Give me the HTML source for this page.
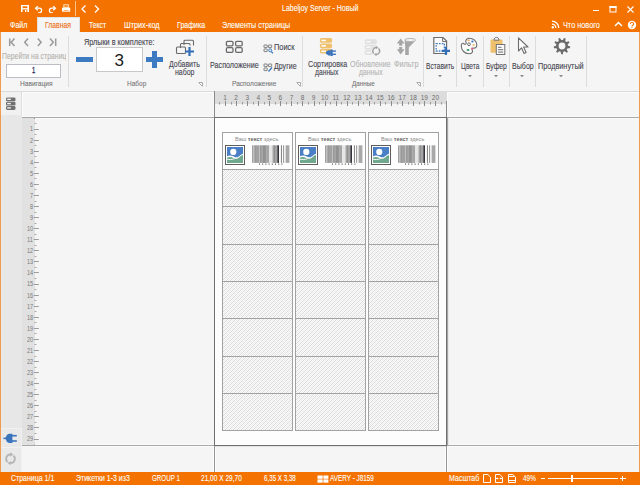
<!DOCTYPE html>
<html><head><meta charset="utf-8"><style>
html,body{margin:0;padding:0;}
body{width:640px;height:485px;overflow:hidden;position:relative;background:#F5F5F5;font-family:"Liberation Sans",sans-serif;}
body div, body svg{position:absolute;}
body div div{position:absolute;}
</style></head><body>
<div style="left:0px;top:0px;width:640px;height:32px;background:#F47300;"></div>
<div style="left:37px;top:17px;width:43px;height:15px;background:#F5F5F5;box-sizing:border-box;border:1px solid #E2E2E2;border-bottom:none"></div>
<div style="left:1px;top:32px;width:638px;height:59px;background:#F5F5F5;"></div>
<div style="left:1px;top:91px;width:638px;height:1px;background:#DADADA;"></div>
<div style="left:0px;top:32px;width:1px;height:440px;background:#F19A52;"></div>
<div style="left:639px;top:32px;width:1px;height:440px;background:#F19A52;"></div>
<div style="left:281.70px;top:4.00px;font-size:8.5px;line-height:8.5px;color:#ffffff;font-weight:400;transform:scaleX(0.8227);transform-origin:0 0;white-space:nowrap;-webkit-text-stroke:0.1px currentColor;">Labeljoy Server - Новый</div>
<svg style="left:20px;top:4px" width="10" height="9" viewBox="0 0 10 9"><rect x="1" y="1" width="8" height="7" fill="#ffffff"/><rect x="2.6" y="2.3" width="4.8" height="1.8" fill="#F47300"/><rect x="2.6" y="5.4" width="4.8" height="2.6" fill="#F47300"/><rect x="5" y="6" width="1.4" height="2" fill="#ffffff"/></svg>
<svg style="left:34px;top:4px" width="9" height="9" viewBox="0 0 9 9"><path d="M2 4.2h3.3a2.3 2.3 0 0 1 0 4.6h-1.3" fill="none" stroke="#ffffff" stroke-width="1.3"/><path d="M3.8 2.2L1.6 4.2L3.8 6.2" fill="none" stroke="#ffffff" stroke-width="1.3"/></svg>
<svg style="left:47.5px;top:4px" width="9" height="9" viewBox="0 0 9 9"><path d="M7 4.2h-3.3a2.3 2.3 0 0 0 0 4.6h1.3" fill="none" stroke="#ffffff" stroke-width="1.3"/><path d="M5.2 2.2L7.4 4.2L5.2 6.2" fill="none" stroke="#ffffff" stroke-width="1.3"/></svg>
<svg style="left:61px;top:4px" width="10" height="9" viewBox="0 0 10 9"><rect x="2.8" y="0.8" width="4.6" height="2.4" fill="none" stroke="#FFE0C0" stroke-width="1"/><rect x="1" y="3.4" width="8.2" height="4.4" rx="0.8" fill="#ffffff"/><rect x="2.6" y="6" width="5" height="1.2" fill="#F9B070"/></svg>
<div style="left:75px;top:1px;width:1px;height:15px;background:#FBC08C;"></div>
<svg style="left:80px;top:4px" width="8" height="9" viewBox="0 0 8 9"><path d="M5.5 1.5L2 5L5.5 8.5" fill="none" stroke="#ffffff" stroke-width="1.3"/></svg>
<svg style="left:93px;top:4px" width="8" height="9" viewBox="0 0 8 9"><path d="M2 1.5L5.5 5L2 8.5" fill="none" stroke="#ffffff" stroke-width="1.3"/></svg>
<div style="left:593px;top:10px;width:6px;height:1px;background:#ffffff;"></div>
<svg style="left:608px;top:5px" width="10" height="9" viewBox="0 0 10 9"><rect x="2" y="1.5" width="6" height="5.5" fill="none" stroke="#ffffff" stroke-width="1"/><rect x="1.5" y="1" width="7" height="2" fill="#ffffff"/></svg>
<svg style="left:626px;top:5px" width="9" height="9" viewBox="0 0 9 9"><path d="M1.5 1.5L7.5 7.5M7.5 1.5L1.5 7.5" stroke="#ffffff" stroke-width="1.1"/></svg>
<div style="left:10.00px;top:21.00px;font-size:8.5px;line-height:8.5px;color:#ffffff;font-weight:400;transform:scaleX(0.8358);transform-origin:0 0;white-space:nowrap;-webkit-text-stroke:0.1px currentColor;">Файл</div>
<div style="left:45.00px;top:21.00px;font-size:8.5px;line-height:8.5px;color:#EE6A10;font-weight:400;transform:scaleX(0.8031);transform-origin:0 0;white-space:nowrap;-webkit-text-stroke:0.1px currentColor;">Главная</div>
<div style="left:89.40px;top:21.00px;font-size:8.5px;line-height:8.5px;color:#ffffff;font-weight:400;transform:scaleX(0.7951);transform-origin:0 0;white-space:nowrap;-webkit-text-stroke:0.1px currentColor;">Текст</div>
<div style="left:123.90px;top:21.00px;font-size:8.5px;line-height:8.5px;color:#ffffff;font-weight:400;transform:scaleX(0.8559);transform-origin:0 0;white-space:nowrap;-webkit-text-stroke:0.1px currentColor;">Штрих-код</div>
<div style="left:176.60px;top:21.00px;font-size:8.5px;line-height:8.5px;color:#ffffff;font-weight:400;transform:scaleX(0.8298);transform-origin:0 0;white-space:nowrap;-webkit-text-stroke:0.1px currentColor;">Графика</div>
<div style="left:222.00px;top:21.00px;font-size:8.5px;line-height:8.5px;color:#ffffff;font-weight:400;transform:scaleX(0.8390);transform-origin:0 0;white-space:nowrap;-webkit-text-stroke:0.1px currentColor;">Элементы страницы</div>
<div style="left:562.70px;top:21.00px;font-size:8.5px;line-height:8.5px;color:#ffffff;font-weight:400;transform:scaleX(0.8598);transform-origin:0 0;white-space:nowrap;-webkit-text-stroke:0.1px currentColor;">Что нового</div>
<svg style="left:551px;top:20px" width="9" height="9" viewBox="0 0 9 9"><circle cx="1.8" cy="7.2" r="1.2" fill="#ffffff"/><path d="M1 4.2a3.8 3.8 0 0 1 3.8 3.8M1 1.2a6.8 6.8 0 0 1 6.8 6.8" fill="none" stroke="#ffffff" stroke-width="1.3"/></svg>
<svg style="left:614px;top:21px" width="9" height="6" viewBox="0 0 9 6"><path d="M1 5L4.5 1.5L8 5" fill="none" stroke="#ffffff" stroke-width="1.5"/></svg>
<svg style="left:627px;top:20px" width="10" height="10" viewBox="0 0 10 10"><circle cx="5" cy="5" r="4.2" fill="#ffffff"/><path d="M3.4 3.9a1.6 1.6 0 1 1 2.3 1.4c-.5.3-.7.6-.7 1.1" fill="none" stroke="#F47300" stroke-width="1.1"/><circle cx="5" cy="7.6" r="0.6" fill="#F47300"/></svg>
<div style="left:68px;top:36px;width:1px;height:51px;background:#DCDCDC;"></div>
<div style="left:206px;top:36px;width:1px;height:51px;background:#DCDCDC;"></div>
<div style="left:302px;top:36px;width:1px;height:51px;background:#DCDCDC;"></div>
<div style="left:423px;top:36px;width:1px;height:51px;background:#DCDCDC;"></div>
<div style="left:456px;top:36px;width:1px;height:51px;background:#DCDCDC;"></div>
<div style="left:483px;top:36px;width:1px;height:51px;background:#DCDCDC;"></div>
<div style="left:509px;top:36px;width:1px;height:51px;background:#DCDCDC;"></div>
<div style="left:535px;top:36px;width:1px;height:51px;background:#DCDCDC;"></div>
<div style="left:586px;top:36px;width:1px;height:51px;background:#DCDCDC;"></div>
<svg style="left:8px;top:37px" width="50" height="10" viewBox="0 0 50 10"><g fill="none" stroke="#9A9A9A" stroke-width="1.5"><path d="M1.7 1.5v7.5M6.5 1.5L3.2 5.2L6.5 9"/><path d="M20 1.5L16.7 5.2L20 9"/><path d="M29.8 1.5L33.1 5.2L29.8 9"/><path d="M42 1.5L45.3 5.2L42 9M47.7 1.5v7.5"/></g></svg>
<div style="left:1px;top:50px;width:65px;height:12px;overflow:hidden"><div style="left:1.00px;top:2.07px;font-size:8.5px;line-height:8.5px;color:#B4B0AC;-webkit-text-stroke:0.1px currentColor;transform:scaleX(0.8076);transform-origin:0 0;white-space:nowrap">Перейти на страницу</div></div>
<div style="left:5.5px;top:64px;width:55px;height:13.5px;background:#ffffff;box-sizing:border-box;border:1px solid #BDBDC6"></div>
<div style="left:31.60px;top:66.00px;font-size:9px;line-height:9px;color:#2A2A5A;font-weight:400;transform:scaleX(0.6400);transform-origin:0 0;white-space:nowrap;-webkit-text-stroke:0.3px currentColor;">1</div>
<div style="left:19.70px;top:80.00px;font-size:8px;line-height:8px;color:#767676;font-weight:400;transform:scaleX(0.8242);transform-origin:0 0;white-space:nowrap;-webkit-text-stroke:0.1px currentColor;">Навигация</div>
<div style="left:84.30px;top:38.00px;font-size:8.5px;line-height:8.5px;color:#44444F;font-weight:400;transform:scaleX(0.8523);transform-origin:0 0;white-space:nowrap;-webkit-text-stroke:0.1px currentColor;">Ярлыки в комплекте:</div>
<div style="left:76px;top:57px;width:17px;height:4.5px;background:#3C7AC2;"></div>
<div style="left:96px;top:47px;width:47px;height:25px;background:#ffffff;box-sizing:border-box;border:1px solid #C8C8C8"></div>
<div style="left:114.50px;top:52.00px;font-size:17px;line-height:17px;color:#1A1A1A;font-weight:400;transform:scaleX(1.0000);transform-origin:0 0;white-space:nowrap;">3</div>
<div style="left:145.5px;top:57px;width:17.5px;height:4.5px;background:#3C7AC2;"></div>
<div style="left:152px;top:51px;width:4.5px;height:17px;background:#3C7AC2;"></div>
<svg style="left:175px;top:39px" width="21" height="18" viewBox="0 0 21 18"><g fill="none" stroke="#6a6a6a" stroke-width="1.1"><path d="M9 6V2.2a1 1 0 0 1 1-1h7.5a1 1 0 0 1 1 1V6.5"/><path d="M5.5 9V5.5a1 1 0 0 1 1-1h7.5a1 1 0 0 1 1 1V6.5"/><rect x="1.5" y="8" width="9" height="6.5" rx="1"/></g><path d="M14.5 8v9M10 12.5h9" stroke="#3470B8" stroke-width="2.2"/></svg>
<div style="left:169.00px;top:60.00px;font-size:8.5px;line-height:8.5px;color:#44444F;font-weight:400;transform:scaleX(0.8207);transform-origin:0 0;white-space:nowrap;-webkit-text-stroke:0.1px currentColor;">Добавить</div>
<div style="left:175.00px;top:68.00px;font-size:8.5px;line-height:8.5px;color:#44444F;font-weight:400;transform:scaleX(0.8202);transform-origin:0 0;white-space:nowrap;-webkit-text-stroke:0.1px currentColor;">набор</div>
<div style="left:127.30px;top:80.00px;font-size:8px;line-height:8px;color:#767676;font-weight:400;transform:scaleX(0.8121);transform-origin:0 0;white-space:nowrap;-webkit-text-stroke:0.1px currentColor;">Набор</div>
<svg style="left:225px;top:40px" width="19" height="14" viewBox="0 0 19 14"><g fill="none" stroke="#6a6a6a" stroke-width="1.3"><rect x="1.4" y="1.4" width="6.6" height="4.4" rx="1.2"/><rect x="10.6" y="1.4" width="6.6" height="4.4" rx="1.2"/><rect x="1.4" y="7.7" width="6.6" height="4.6" rx="1.2"/><rect x="10.6" y="7.7" width="6.6" height="4.6" rx="1.2"/></g></svg>
<div style="left:210.00px;top:61.00px;font-size:8.5px;line-height:8.5px;color:#44444F;font-weight:400;transform:scaleX(0.8441);transform-origin:0 0;white-space:nowrap;-webkit-text-stroke:0.1px currentColor;">Расположение</div>
<svg style="left:262.5px;top:43.5px" width="11" height="10" viewBox="0 0 11 10"><g fill="none" stroke="#808080" stroke-width="1"><rect x="1" y="1" width="3.2" height="2.6" rx=".3"/><rect x="5.5" y="1" width="3.2" height="2.6" rx=".3"/><rect x="1" y="5" width="3.2" height="2.6" rx=".3"/></g><circle cx="7.2" cy="6.3" r="1.5" fill="none" stroke="#3C7AC2" stroke-width="1"/><path d="M8.3 7.5L10 9.3" stroke="#3C7AC2" stroke-width="1.2"/></svg>
<div style="left:274.20px;top:43.00px;font-size:8.5px;line-height:8.5px;color:#44444F;font-weight:400;transform:scaleX(0.8727);transform-origin:0 0;white-space:nowrap;-webkit-text-stroke:0.1px currentColor;">Поиск</div>
<svg style="left:262.5px;top:62.5px" width="11" height="9" viewBox="0 0 11 9"><g fill="none" stroke="#808080" stroke-width="1"><rect x="1" y="1" width="3.2" height="2.6" rx=".3"/><rect x="5.5" y="1" width="3.2" height="2.6" rx=".3"/><rect x="1" y="5" width="3.2" height="2.6" rx=".3"/></g><path d="M9 4.5L5.5 8.5" stroke="#3C7AC2" stroke-width="1.4"/></svg>
<div style="left:274.20px;top:62.00px;font-size:8.5px;line-height:8.5px;color:#44444F;font-weight:400;transform:scaleX(0.8295);transform-origin:0 0;white-space:nowrap;-webkit-text-stroke:0.1px currentColor;">Другие</div>
<div style="left:231.80px;top:80.00px;font-size:8px;line-height:8px;color:#767676;font-weight:400;transform:scaleX(0.8138);transform-origin:0 0;white-space:nowrap;-webkit-text-stroke:0.1px currentColor;">Расположение</div>
<svg style="left:318px;top:37px" width="20" height="19" viewBox="0 0 20 19"><rect x="1.9" y="1.0" width="12.2" height="4.8" rx="1.6" fill="#EFC06E"/><rect x="3.5" y="2.7" width="4.4" height="1.5" fill="#ffffff"/><rect x="1.9" y="6.4" width="12.2" height="4.8" rx="1.6" fill="#EFC06E"/><rect x="3.5" y="8.1" width="4.4" height="1.5" fill="#ffffff"/><rect x="1.9" y="11.8" width="12.2" height="4.8" rx="1.6" fill="#EFC06E"/><rect x="3.5" y="13.5" width="4.4" height="1.5" fill="#ffffff"/><g fill="#3A74BC"><path d="M8 14.8l2.5-1.6h2.3v5.2h-2.3L8 16.8z"/><rect x="12.5" y="12.6" width="2.3" height="6.4" rx=".5"/><rect x="14.5" y="13.4" width="3.4" height="1.4"/><rect x="14.5" y="16.6" width="3.4" height="1.4"/></g></svg>
<div style="left:307.50px;top:60.00px;font-size:8.5px;line-height:8.5px;color:#44444F;font-weight:400;transform:scaleX(0.8397);transform-origin:0 0;white-space:nowrap;-webkit-text-stroke:0.1px currentColor;">Сортировка</div>
<div style="left:315.00px;top:68.00px;font-size:8.5px;line-height:8.5px;color:#44444F;font-weight:400;transform:scaleX(0.7918);transform-origin:0 0;white-space:nowrap;-webkit-text-stroke:0.1px currentColor;">данных</div>
<svg style="left:363px;top:38px" width="20" height="19" viewBox="0 0 20 19"><rect x="1.7" y="1.3" width="12.2" height="4.8" rx="1.6" fill="#E0E0E0"/><rect x="3.3" y="3.0" width="4.4" height="1.5" fill="#F9F9F9"/><rect x="1.7" y="6.7" width="12.2" height="4.8" rx="1.6" fill="#E0E0E0"/><rect x="3.3" y="8.4" width="4.4" height="1.5" fill="#F9F9F9"/><rect x="1.7" y="12.100000000000001" width="12.2" height="4.8" rx="1.6" fill="#E0E0E0"/><rect x="3.3" y="13.8" width="4.4" height="1.5" fill="#F9F9F9"/><circle cx="13.2" cy="13" r="5" fill="#F5F5F5"/><g fill="none" stroke="#A4A4A4" stroke-width="1.5"><path d="M13.6 9.6A3.4 3.4 0 0 0 10.9 15.5"/><path d="M12.8 16.4A3.4 3.4 0 0 0 15.5 10.5"/></g><path d="M12.9 7.9L15.5 9.6L12.9 11.3z M13.5 14.7L10.9 16.4L13.5 18.1z" fill="#A4A4A4"/></svg>
<div style="left:350.00px;top:60.00px;font-size:8.5px;line-height:8.5px;color:#B4B4B4;font-weight:400;transform:scaleX(0.8267);transform-origin:0 0;white-space:nowrap;-webkit-text-stroke:0.1px currentColor;">Обновление</div>
<div style="left:358.80px;top:68.00px;font-size:8.5px;line-height:8.5px;color:#B4B4B4;font-weight:400;transform:scaleX(0.8017);transform-origin:0 0;white-space:nowrap;-webkit-text-stroke:0.1px currentColor;">данных</div>
<svg style="left:395px;top:37px" width="22" height="19" viewBox="0 0 22 19"><g fill="#A6A6A6"><path d="M1.8 6.6L5.7 1.6L9.6 6.6H7.2V8.8H4.2V6.6z"/><path d="M1.8 12.2L5.7 17.6L9.6 12.2H7.2V10H4.2V12.2z"/><path d="M9.6 3.2Q15.5 5.6 20.8 3.2L13.8 10.6V18H10.2V9.2z"/></g><ellipse cx="15.2" cy="3" rx="5.4" ry="1.5" fill="#F8F8F8" stroke="#B0B0B0" stroke-width="1"/></svg>
<div style="left:393.90px;top:60.00px;font-size:8.5px;line-height:8.5px;color:#B4B4B4;font-weight:400;transform:scaleX(0.8568);transform-origin:0 0;white-space:nowrap;-webkit-text-stroke:0.1px currentColor;">Фильтр</div>
<div style="left:352.00px;top:80.00px;font-size:8px;line-height:8px;color:#767676;font-weight:400;transform:scaleX(0.7911);transform-origin:0 0;white-space:nowrap;-webkit-text-stroke:0.1px currentColor;">Данные</div>
<svg style="left:198px;top:81.5px" width="5" height="5" viewBox="0 0 5 5"><path d="M0.5 0.5h4v4" fill="none" stroke="#9a9a9a" stroke-width=".8"/><path d="M1 1L4 4" stroke="#9a9a9a" stroke-width=".8"/></svg>
<svg style="left:295.5px;top:81.5px" width="5" height="5" viewBox="0 0 5 5"><path d="M0.5 0.5h4v4" fill="none" stroke="#9a9a9a" stroke-width=".8"/><path d="M1 1L4 4" stroke="#9a9a9a" stroke-width=".8"/></svg>
<svg style="left:416px;top:81.5px" width="5" height="5" viewBox="0 0 5 5"><path d="M0.5 0.5h4v4" fill="none" stroke="#9a9a9a" stroke-width=".8"/><path d="M1 1L4 4" stroke="#9a9a9a" stroke-width=".8"/></svg>
<svg style="left:432px;top:36px" width="20" height="20" viewBox="0 0 20 20"><path d="M1.8 1.5h9.2l3.6 3.6v12.4H1.8z" fill="#fbfbfb" stroke="#6d6d6d" stroke-width="1.2"/><path d="M10.6 1.8v3.8h3.8" fill="none" stroke="#6d6d6d" stroke-width="1"/><rect x="4.2" y="7.6" width="8.2" height="7.4" fill="none" stroke="#3C7AC2" stroke-width="1.3" stroke-dasharray="1.6 1.2"/><path d="M13.9 10.7v8.2M9.8 14.8h8.2" stroke="#3470B8" stroke-width="2.2"/></svg>
<div style="left:426.00px;top:62.00px;font-size:8.5px;line-height:8.5px;color:#44444F;font-weight:400;transform:scaleX(0.7841);transform-origin:0 0;white-space:nowrap;-webkit-text-stroke:0.1px currentColor;">Вставить</div>
<svg style="left:460px;top:37px" width="19" height="18" viewBox="0 0 19 18"><path d="M9 1.2c4.3 0 7.8 2.9 7.8 6.7c0 2.3-1.6 3.2-3.2 3.2c-1.4 0-2 .9-1.3 2.2c.8 1.6-.3 3.4-3.4 3.4C4.6 16.7 1.3 13.4 1.3 9.1c0-1 .3-1.9.8-2.6c.4-.5 1.3-.3 1.9.3c.9.9 2.2.5 2.2-.8c0-1.2-.9-1.9-.3-2.7C6.6 2 7.7 1.2 9 1.2z" fill="#fbfbfb" stroke="#6d6d6d" stroke-width="1.1"/><circle cx="9" cy="7.3" r="1.4" fill="none" stroke="#6d6d6d" stroke-width="1"/><ellipse cx="8.6" cy="3.2" rx="1.3" ry=".8" fill="#F5A040"/><ellipse cx="12.4" cy="4.6" rx="1.2" ry="1" fill="#3C7AC2"/><ellipse cx="13.6" cy="8" rx="1.1" ry="1" fill="#F0C060"/><ellipse cx="12.2" cy="11.5" rx="1.1" ry="1" fill="#E06080"/><ellipse cx="8" cy="13" rx="1.5" ry="1" fill="#3E9A6E"/></svg>
<div style="left:461.00px;top:62.00px;font-size:8.5px;line-height:8.5px;color:#44444F;font-weight:400;transform:scaleX(0.7766);transform-origin:0 0;white-space:nowrap;-webkit-text-stroke:0.1px currentColor;">Цвета</div>
<svg style="left:489px;top:36px" width="17" height="20" viewBox="0 0 17 20"><rect x="1.5" y="3.6" width="12" height="13.2" rx="1" fill="#EFC06E"/><path d="M5 4.2c0-1.8 1-2.8 2.5-2.8s2.5 1 2.5 2.8z" fill="#f3f3f3" stroke="#707070" stroke-width="1"/><rect x="7.3" y="8.5" width="8.5" height="10" fill="#fbfbfb" stroke="#707070" stroke-width="1"/><path d="M9 11.3h3.5M9 13.7h5.2M9 16.1h5.2" stroke="#6d6d6d" stroke-width="1"/></svg>
<div style="left:485.70px;top:62.00px;font-size:8.5px;line-height:8.5px;color:#44444F;font-weight:400;transform:scaleX(0.7995);transform-origin:0 0;white-space:nowrap;-webkit-text-stroke:0.1px currentColor;">Буфер</div>
<svg style="left:516px;top:36px" width="14" height="19" viewBox="0 0 14 19"><path d="M2.5 1.8v13.2l3-3.2l2.6 5.6l2-1l-2.5-5.4h4.4z" fill="#fbfbfb" stroke="#6d6d6d" stroke-width="1.1" stroke-linejoin="round"/></svg>
<div style="left:511.50px;top:62.00px;font-size:8.5px;line-height:8.5px;color:#44444F;font-weight:400;transform:scaleX(0.8341);transform-origin:0 0;white-space:nowrap;-webkit-text-stroke:0.1px currentColor;">Выбор</div>
<svg style="left:553px;top:37px" width="18" height="18" viewBox="0 0 18 18"><path d="M10.27 14.87 L9.85 17.26 L8.15 17.26 L7.73 14.87 L6.20 14.31 L4.34 15.87 L3.05 14.78 L4.26 12.68 L3.44 11.26 L1.02 11.27 L0.72 9.60 L3.00 8.77 L3.29 7.16 L1.43 5.60 L2.27 4.14 L4.55 4.97 L5.80 3.92 L5.38 1.53 L6.97 0.95 L8.18 3.06 L9.82 3.06 L11.03 0.95 L12.62 1.53 L12.20 3.92 L13.45 4.97 L15.73 4.14 L16.57 5.60 L14.71 7.16 L15.00 8.77 L17.28 9.60 L16.98 11.27 L14.56 11.26 L13.74 12.68 L14.95 14.78 L13.66 15.87 L11.80 14.31Z M12.4 9a3.4 3.4 0 1 0 -6.8 0a3.4 3.4 0 1 0 6.8 0z" fill="#6a6a6a" fill-rule="evenodd"/></svg>
<div style="left:537.70px;top:62.00px;font-size:8.5px;line-height:8.5px;color:#44444F;font-weight:400;transform:scaleX(0.8572);transform-origin:0 0;white-space:nowrap;-webkit-text-stroke:0.1px currentColor;">Продвинутый</div>
<svg style="left:437.5px;top:75px" width="4" height="3" viewBox="0 0 4 3"><path d="M0 0h4l-2 2.2z" fill="#8a8a8a"/></svg>
<svg style="left:467.7px;top:75px" width="4" height="3" viewBox="0 0 4 3"><path d="M0 0h4l-2 2.2z" fill="#8a8a8a"/></svg>
<svg style="left:494px;top:75px" width="4" height="3" viewBox="0 0 4 3"><path d="M0 0h4l-2 2.2z" fill="#8a8a8a"/></svg>
<svg style="left:520px;top:75px" width="4" height="3" viewBox="0 0 4 3"><path d="M0 0h4l-2 2.2z" fill="#8a8a8a"/></svg>
<svg style="left:559px;top:75px" width="4" height="3" viewBox="0 0 4 3"><path d="M0 0h4l-2 2.2z" fill="#8a8a8a"/></svg>
<div style="left:1px;top:92px;width:638px;height:380px;background:#F5F5F5;"></div>
<div style="left:1px;top:92px;width:21px;height:380px;background:#E7E7E7;"></div>
<div style="left:1px;top:92px;width:21px;height:23px;background:#F1F1F1;"></div>
<div style="left:1px;top:428px;width:21px;height:19px;background:#E9E9E9;"></div>
<div style="left:1px;top:447px;width:21px;height:25px;background:#E9E9E9;"></div>
<div style="left:1px;top:428px;width:21px;height:1px;background:#F2F2F2;"></div>
<div style="left:1px;top:447px;width:21px;height:1px;background:#F2F2F2;"></div>
<div style="left:21px;top:428px;width:1px;height:44px;background:#F0F0F0;"></div>
<div style="left:21px;top:92px;width:1px;height:23px;background:#DEDEDE;"></div>
<div style="left:22px;top:92px;width:192px;height:1px;background:#FCFCFC;"></div>
<div style="left:22px;top:92px;width:1px;height:25px;background:#FCFCFC;"></div>
<div style="left:22px;top:116px;width:192px;height:1px;background:#FAFAFA;"></div>
<div style="left:213px;top:92px;width:1px;height:25px;background:#FAFAFA;"></div>
<svg style="left:5px;top:96px" width="12" height="15" viewBox="0 0 12 15"><g fill="#707070"><rect x="1" y="1.5" width="9.5" height="3.8" rx="1.3"/><rect x="1" y="5.8" width="9.5" height="3.8" rx="1.3"/><rect x="1" y="10.1" width="9.5" height="3.8" rx="1.3"/></g><g fill="#f1f1f1"><rect x="2.2" y="2.6" width="3.6" height="1.4"/><rect x="2.2" y="6.9" width="3.6" height="1.4"/><rect x="2.2" y="11.2" width="3.6" height="1.4"/></g></svg>
<svg style="left:3px;top:433px" width="15" height="11" viewBox="0 0 15 11"><g fill="#3A74BC"><rect x="0.4" y="4.6" width="3.2" height="1.5"/><path d="M2.8 4.2Q3.6 1.2 6 0.8H9.4V10H6Q3.6 9.6 2.8 6.6Z"/><rect x="9" y="1.9" width="4.8" height="1.6"/><rect x="9" y="7.2" width="4.8" height="1.6"/></g></svg>
<svg style="left:4px;top:452px" width="14" height="14" viewBox="0 0 14 14"><g fill="none" stroke="#B6B6B6" stroke-width="1.9"><path d="M6.8 2.5A4.3 4.3 0 0 0 3.6 10"/><path d="M6.2 11.1A4.3 4.3 0 0 0 9.4 3.6"/></g><path d="M6.2 0.3L9.4 2.5L6.2 4.7z M6.8 8.9L3.6 11.1L6.8 13.3z" fill="#B6B6B6"/></svg>
<div style="left:22px;top:118px;width:13px;height:327px;background:#E1E1E1;"></div>
<div style="left:215px;top:91px;width:232px;height:13px;background:#DCDCDC;"></div>
<div style="left:447px;top:92px;width:192px;height:1px;background:#FCFCFC;"></div>
<div style="left:447px;top:92px;width:1px;height:25px;background:#FCFCFC;"></div>
<div style="left:447px;top:116px;width:192px;height:1px;background:#FAFAFA;"></div>
<svg style="left:214px;top:92px" width="234" height="15" viewBox="0 0 234 15"><rect x="0" y="9" width="1" height="5" fill="#8A8A8A"/><rect x="5" y="10" width="1" height="2.5" fill="#9A9A9A"/><rect x="11" y="9" width="1" height="5" fill="#8A8A8A"/><rect x="17" y="10" width="1" height="2.5" fill="#9A9A9A"/><rect x="22" y="9" width="1" height="5" fill="#8A8A8A"/><rect x="28" y="10" width="1" height="2.5" fill="#9A9A9A"/><rect x="33" y="9" width="1" height="5" fill="#8A8A8A"/><rect x="39" y="10" width="1" height="2.5" fill="#9A9A9A"/><rect x="44" y="9" width="1" height="5" fill="#8A8A8A"/><rect x="50" y="10" width="1" height="2.5" fill="#9A9A9A"/><rect x="55" y="9" width="1" height="5" fill="#8A8A8A"/><rect x="61" y="10" width="1" height="2.5" fill="#9A9A9A"/><rect x="66" y="9" width="1" height="5" fill="#8A8A8A"/><rect x="72" y="10" width="1" height="2.5" fill="#9A9A9A"/><rect x="77" y="9" width="1" height="5" fill="#8A8A8A"/><rect x="83" y="10" width="1" height="2.5" fill="#9A9A9A"/><rect x="88" y="9" width="1" height="5" fill="#8A8A8A"/><rect x="94" y="10" width="1" height="2.5" fill="#9A9A9A"/><rect x="100" y="9" width="1" height="5" fill="#8A8A8A"/><rect x="105" y="10" width="1" height="2.5" fill="#9A9A9A"/><rect x="111" y="9" width="1" height="5" fill="#8A8A8A"/><rect x="116" y="10" width="1" height="2.5" fill="#9A9A9A"/><rect x="122" y="9" width="1" height="5" fill="#8A8A8A"/><rect x="127" y="10" width="1" height="2.5" fill="#9A9A9A"/><rect x="133" y="9" width="1" height="5" fill="#8A8A8A"/><rect x="138" y="10" width="1" height="2.5" fill="#9A9A9A"/><rect x="144" y="9" width="1" height="5" fill="#8A8A8A"/><rect x="149" y="10" width="1" height="2.5" fill="#9A9A9A"/><rect x="155" y="9" width="1" height="5" fill="#8A8A8A"/><rect x="160" y="10" width="1" height="2.5" fill="#9A9A9A"/><rect x="166" y="9" width="1" height="5" fill="#8A8A8A"/><rect x="171" y="10" width="1" height="2.5" fill="#9A9A9A"/><rect x="177" y="9" width="1" height="5" fill="#8A8A8A"/><rect x="183" y="10" width="1" height="2.5" fill="#9A9A9A"/><rect x="188" y="9" width="1" height="5" fill="#8A8A8A"/><rect x="194" y="10" width="1" height="2.5" fill="#9A9A9A"/><rect x="199" y="9" width="1" height="5" fill="#8A8A8A"/><rect x="205" y="10" width="1" height="2.5" fill="#9A9A9A"/><rect x="210" y="9" width="1" height="5" fill="#8A8A8A"/><rect x="216" y="10" width="1" height="2.5" fill="#9A9A9A"/><rect x="221" y="9" width="1" height="5" fill="#8A8A8A"/><rect x="227" y="10" width="1" height="2.5" fill="#9A9A9A"/><rect x="232" y="9" width="1" height="5" fill="#8A8A8A"/></svg>
<svg style="left:22px;top:117px" width="17" height="330" viewBox="0 0 17 330"><rect x="11.8" y="1" width="5" height="1" fill="#9C9C9C"/><rect x="12.5" y="6" width="2" height="1" fill="#A8A8A8"/><rect x="11.8" y="12" width="5" height="1" fill="#9C9C9C"/><rect x="12.5" y="17" width="2" height="1" fill="#A8A8A8"/><rect x="11.8" y="23" width="5" height="1" fill="#9C9C9C"/><rect x="12.5" y="28" width="2" height="1" fill="#A8A8A8"/><rect x="11.8" y="34" width="5" height="1" fill="#9C9C9C"/><rect x="12.5" y="39" width="2" height="1" fill="#A8A8A8"/><rect x="11.8" y="45" width="5" height="1" fill="#9C9C9C"/><rect x="12.5" y="50" width="2" height="1" fill="#A8A8A8"/><rect x="11.8" y="56" width="5" height="1" fill="#9C9C9C"/><rect x="12.5" y="61" width="2" height="1" fill="#A8A8A8"/><rect x="11.8" y="67" width="5" height="1" fill="#9C9C9C"/><rect x="12.5" y="72" width="2" height="1" fill="#A8A8A8"/><rect x="11.8" y="78" width="5" height="1" fill="#9C9C9C"/><rect x="12.5" y="84" width="2" height="1" fill="#A8A8A8"/><rect x="11.8" y="89" width="5" height="1" fill="#9C9C9C"/><rect x="12.5" y="95" width="2" height="1" fill="#A8A8A8"/><rect x="11.8" y="100" width="5" height="1" fill="#9C9C9C"/><rect x="12.5" y="106" width="2" height="1" fill="#A8A8A8"/><rect x="11.8" y="111" width="5" height="1" fill="#9C9C9C"/><rect x="12.5" y="117" width="2" height="1" fill="#A8A8A8"/><rect x="11.8" y="122" width="5" height="1" fill="#9C9C9C"/><rect x="12.5" y="128" width="2" height="1" fill="#A8A8A8"/><rect x="11.8" y="133" width="5" height="1" fill="#9C9C9C"/><rect x="12.5" y="139" width="2" height="1" fill="#A8A8A8"/><rect x="11.8" y="144" width="5" height="1" fill="#9C9C9C"/><rect x="12.5" y="150" width="2" height="1" fill="#A8A8A8"/><rect x="11.8" y="155" width="5" height="1" fill="#9C9C9C"/><rect x="12.5" y="161" width="2" height="1" fill="#A8A8A8"/><rect x="11.8" y="167" width="5" height="1" fill="#9C9C9C"/><rect x="12.5" y="172" width="2" height="1" fill="#A8A8A8"/><rect x="11.8" y="178" width="5" height="1" fill="#9C9C9C"/><rect x="12.5" y="183" width="2" height="1" fill="#A8A8A8"/><rect x="11.8" y="189" width="5" height="1" fill="#9C9C9C"/><rect x="12.5" y="194" width="2" height="1" fill="#A8A8A8"/><rect x="11.8" y="200" width="5" height="1" fill="#9C9C9C"/><rect x="12.5" y="205" width="2" height="1" fill="#A8A8A8"/><rect x="11.8" y="211" width="5" height="1" fill="#9C9C9C"/><rect x="12.5" y="216" width="2" height="1" fill="#A8A8A8"/><rect x="11.8" y="222" width="5" height="1" fill="#9C9C9C"/><rect x="12.5" y="227" width="2" height="1" fill="#A8A8A8"/><rect x="11.8" y="233" width="5" height="1" fill="#9C9C9C"/><rect x="12.5" y="239" width="2" height="1" fill="#A8A8A8"/><rect x="11.8" y="244" width="5" height="1" fill="#9C9C9C"/><rect x="12.5" y="250" width="2" height="1" fill="#A8A8A8"/><rect x="11.8" y="255" width="5" height="1" fill="#9C9C9C"/><rect x="12.5" y="261" width="2" height="1" fill="#A8A8A8"/><rect x="11.8" y="266" width="5" height="1" fill="#9C9C9C"/><rect x="12.5" y="272" width="2" height="1" fill="#A8A8A8"/><rect x="11.8" y="277" width="5" height="1" fill="#9C9C9C"/><rect x="12.5" y="283" width="2" height="1" fill="#A8A8A8"/><rect x="11.8" y="288" width="5" height="1" fill="#9C9C9C"/><rect x="12.5" y="294" width="2" height="1" fill="#A8A8A8"/><rect x="11.8" y="299" width="5" height="1" fill="#9C9C9C"/><rect x="12.5" y="305" width="2" height="1" fill="#A8A8A8"/><rect x="11.8" y="310" width="5" height="1" fill="#9C9C9C"/><rect x="12.5" y="316" width="2" height="1" fill="#A8A8A8"/><rect x="11.8" y="322" width="5" height="1" fill="#9C9C9C"/><rect x="12.5" y="327" width="2" height="1" fill="#A8A8A8"/></svg>
<div style="left:215px;top:118px;width:231px;height:327px;background:#FDFDFD;"></div>
<div style="left:35px;top:116px;width:179px;height:1px;background:#FCFCFC;"></div>
<div style="left:35px;top:118px;width:179px;height:1px;background:#FCFCFC;"></div>
<div style="left:448px;top:118px;width:191px;height:1px;background:#FCFCFC;"></div>
<div style="left:35px;top:444px;width:179px;height:1px;background:#FCFCFC;"></div>
<div style="left:35px;top:446px;width:179px;height:1px;background:#FCFCFC;"></div>
<div style="left:448px;top:444px;width:191px;height:1px;background:#FCFCFC;"></div>
<div style="left:448px;top:446px;width:191px;height:1px;background:#FCFCFC;"></div>
<div style="left:22px;top:117px;width:192px;height:1px;background:#A8A8A8;"></div>
<div style="left:214px;top:117px;width:233px;height:1px;background:#707070;"></div>
<div style="left:447px;top:117px;width:192px;height:1px;background:#A8A8A8;"></div>
<div style="left:22px;top:445px;width:192px;height:1px;background:#A8A8A8;"></div>
<div style="left:214px;top:445px;width:233px;height:1px;background:#707070;"></div>
<div style="left:447px;top:445px;width:192px;height:1px;background:#A8A8A8;"></div>
<div style="left:213px;top:446px;width:1px;height:26px;background:#FCFCFC;"></div>
<div style="left:215px;top:447px;width:1px;height:25px;background:#FCFCFC;"></div>
<div style="left:445px;top:447px;width:1px;height:25px;background:#FCFCFC;"></div>
<div style="left:447px;top:447px;width:1px;height:25px;background:#FCFCFC;"></div>
<div style="left:214px;top:91px;width:1px;height:26px;background:#8A8A8A;"></div>
<div style="left:214px;top:117px;width:1px;height:329px;background:#707070;"></div>
<div style="left:214px;top:446px;width:1px;height:26px;background:#969696;"></div>
<div style="left:446px;top:101px;width:1px;height:16px;background:#8A8A8A;"></div>
<div style="left:446px;top:117px;width:1px;height:329px;background:#707070;"></div>
<div style="left:446px;top:446px;width:1px;height:26px;background:#969696;"></div>
<div style="left:447px;top:118px;width:1px;height:327px;background:#A4A4A4;"></div>
<div style="left:448px;top:118px;width:1px;height:327px;background:#E8E8E8;"></div>
<div style="left:215px;top:446px;width:231px;height:1px;background:#E2E2E2;"></div>
<svg style="left:222px;top:132px" width="71" height="299" viewBox="0 0 71 299"><defs><pattern id="h222" width="4" height="4" patternUnits="userSpaceOnUse"><rect width="4" height="4" fill="#FBFBFB"/><rect x="0" y="0" width="1" height="1" fill="#DADADA"/><rect x="0" y="2" width="1" height="1" fill="#ECECEC"/><rect x="1" y="1" width="1" height="1" fill="#ECECEC"/><rect x="1" y="3" width="1" height="1" fill="#DADADA"/><rect x="2" y="0" width="1" height="1" fill="#ECECEC"/><rect x="2" y="2" width="1" height="1" fill="#DADADA"/><rect x="3" y="1" width="1" height="1" fill="#DADADA"/><rect x="3" y="3" width="1" height="1" fill="#ECECEC"/></pattern></defs><rect x="0" y="0" width="71" height="299" fill="#FEFEFE"/><rect x="1" y="38" width="69" height="260" fill="url(#h222)"/><rect x="0" y="0" width="1" height="299" fill="#A2A2A2"/><rect x="70" y="0" width="1" height="299" fill="#A2A2A2"/><rect x="0" y="0" width="71" height="1" fill="#A2A2A2"/><rect x="0" y="37" width="71" height="1" fill="#A2A2A2"/><rect x="0" y="74" width="71" height="1" fill="#A2A2A2"/><rect x="0" y="112" width="71" height="1" fill="#A2A2A2"/><rect x="0" y="149" width="71" height="1" fill="#A2A2A2"/><rect x="0" y="186" width="71" height="1" fill="#A2A2A2"/><rect x="0" y="224" width="71" height="1" fill="#A2A2A2"/><rect x="0" y="261" width="71" height="1" fill="#A2A2A2"/><rect x="0" y="298" width="71" height="1" fill="#A2A2A2"/></svg>
<svg style="left:295px;top:132px" width="71" height="299" viewBox="0 0 71 299"><defs><pattern id="h295" width="4" height="4" patternUnits="userSpaceOnUse"><rect width="4" height="4" fill="#FBFBFB"/><rect x="0" y="0" width="1" height="1" fill="#DADADA"/><rect x="0" y="2" width="1" height="1" fill="#ECECEC"/><rect x="1" y="1" width="1" height="1" fill="#ECECEC"/><rect x="1" y="3" width="1" height="1" fill="#DADADA"/><rect x="2" y="0" width="1" height="1" fill="#ECECEC"/><rect x="2" y="2" width="1" height="1" fill="#DADADA"/><rect x="3" y="1" width="1" height="1" fill="#DADADA"/><rect x="3" y="3" width="1" height="1" fill="#ECECEC"/></pattern></defs><rect x="0" y="0" width="71" height="299" fill="#FEFEFE"/><rect x="1" y="38" width="69" height="260" fill="url(#h295)"/><rect x="0" y="0" width="1" height="299" fill="#A2A2A2"/><rect x="70" y="0" width="1" height="299" fill="#A2A2A2"/><rect x="0" y="0" width="71" height="1" fill="#A2A2A2"/><rect x="0" y="37" width="71" height="1" fill="#A2A2A2"/><rect x="0" y="74" width="71" height="1" fill="#A2A2A2"/><rect x="0" y="112" width="71" height="1" fill="#A2A2A2"/><rect x="0" y="149" width="71" height="1" fill="#A2A2A2"/><rect x="0" y="186" width="71" height="1" fill="#A2A2A2"/><rect x="0" y="224" width="71" height="1" fill="#A2A2A2"/><rect x="0" y="261" width="71" height="1" fill="#A2A2A2"/><rect x="0" y="298" width="71" height="1" fill="#A2A2A2"/></svg>
<svg style="left:368px;top:132px" width="71" height="299" viewBox="0 0 71 299"><defs><pattern id="h368" width="4" height="4" patternUnits="userSpaceOnUse"><rect width="4" height="4" fill="#FBFBFB"/><rect x="0" y="0" width="1" height="1" fill="#DADADA"/><rect x="0" y="2" width="1" height="1" fill="#ECECEC"/><rect x="1" y="1" width="1" height="1" fill="#ECECEC"/><rect x="1" y="3" width="1" height="1" fill="#DADADA"/><rect x="2" y="0" width="1" height="1" fill="#ECECEC"/><rect x="2" y="2" width="1" height="1" fill="#DADADA"/><rect x="3" y="1" width="1" height="1" fill="#DADADA"/><rect x="3" y="3" width="1" height="1" fill="#ECECEC"/></pattern></defs><rect x="0" y="0" width="71" height="299" fill="#FEFEFE"/><rect x="1" y="38" width="69" height="260" fill="url(#h368)"/><rect x="0" y="0" width="1" height="299" fill="#A2A2A2"/><rect x="70" y="0" width="1" height="299" fill="#A2A2A2"/><rect x="0" y="0" width="71" height="1" fill="#A2A2A2"/><rect x="0" y="37" width="71" height="1" fill="#A2A2A2"/><rect x="0" y="74" width="71" height="1" fill="#A2A2A2"/><rect x="0" y="112" width="71" height="1" fill="#A2A2A2"/><rect x="0" y="149" width="71" height="1" fill="#A2A2A2"/><rect x="0" y="186" width="71" height="1" fill="#A2A2A2"/><rect x="0" y="224" width="71" height="1" fill="#A2A2A2"/><rect x="0" y="261" width="71" height="1" fill="#A2A2A2"/><rect x="0" y="298" width="71" height="1" fill="#A2A2A2"/></svg>
<div style="left:235.30px;top:136px;font-size:6px;line-height:6px;color:#8A8A8A;white-space:nowrap;transform:scaleX(0.93);transform-origin:0 0">Ваш <b style="color:#666">текст</b> здесь</div>
<svg style="left:225px;top:145px" width="20" height="20" viewBox="0 0 20 20"><rect x="0.5" y="0.5" width="19" height="19" fill="#fff" stroke="#5E5E5E" stroke-width="1"/><rect x="2" y="2" width="16" height="16" fill="#4A7FC6"/><circle cx="8.3" cy="6.9" r="3.1" fill="#fff"/><path d="M2 11.2c2.2-.9 4.5-.9 6.8.2c2 .9 3.2 1.1 3.8.8c2-1 3.8-3 5.4-3.4V18H2z" fill="#fff"/><path d="M2 12.4c2.2-.8 4.3-.7 6.4.5c2 1 3.2 1 4.2.5c2.1-1.2 3.6-3.1 5.4-3.4V18H2z" fill="#6FA88F"/><path d="M2 14.2c2.5 .6 5 .6 7.5-.6" fill="none" stroke="#fff" stroke-width=".9"/></svg>
<svg style="left:251.5px;top:144.8px" width="38" height="21" viewBox="0 0 38 21"><rect x="0.40" y="0.3" width="1.00" height="17.6" fill="#666"/><rect x="2.50" y="0.3" width="4.50" height="17.6" fill="#A2A2A2"/><rect x="2.50" y="0.3" width="0.80" height="17.6" fill="#888"/><rect x="7.00" y="0.3" width="1.00" height="17.6" fill="#C0C0C0"/><rect x="8.00" y="0.3" width="1.50" height="17.6" fill="#9A9A9A"/><rect x="9.50" y="0.3" width="1.00" height="17.6" fill="#777"/><rect x="10.50" y="0.3" width="3.00" height="17.6" fill="#929292"/><rect x="13.50" y="0.3" width="1.00" height="17.6" fill="#666"/><rect x="14.50" y="0.3" width="2.50" height="17.6" fill="#A6A6A6"/><rect x="17.00" y="0.3" width="3.00" height="17.6" fill="#E6E6E6"/><rect x="20.40" y="0.3" width="5.00" height="17.6" fill="#A4A4A4"/><rect x="22.00" y="0.3" width="0.80" height="17.6" fill="#8C8C8C"/><rect x="25.40" y="0.3" width="1.50" height="17.6" fill="#1E1E28"/><rect x="28.90" y="0.3" width="1.10" height="17.6" fill="#888"/><rect x="31.30" y="0.3" width="0.80" height="17.6" fill="#777"/><rect x="33.60" y="0.3" width="3.80" height="17.6" fill="#A8A8A8"/><path d="M7 19.2h24" stroke="#555" stroke-width="1.2" stroke-dasharray="1 2.2"/></svg>
<div style="left:308.30px;top:136px;font-size:6px;line-height:6px;color:#8A8A8A;white-space:nowrap;transform:scaleX(0.93);transform-origin:0 0">Ваш <b style="color:#666">текст</b> здесь</div>
<svg style="left:298px;top:145px" width="20" height="20" viewBox="0 0 20 20"><rect x="0.5" y="0.5" width="19" height="19" fill="#fff" stroke="#5E5E5E" stroke-width="1"/><rect x="2" y="2" width="16" height="16" fill="#4A7FC6"/><circle cx="8.3" cy="6.9" r="3.1" fill="#fff"/><path d="M2 11.2c2.2-.9 4.5-.9 6.8.2c2 .9 3.2 1.1 3.8.8c2-1 3.8-3 5.4-3.4V18H2z" fill="#fff"/><path d="M2 12.4c2.2-.8 4.3-.7 6.4.5c2 1 3.2 1 4.2.5c2.1-1.2 3.6-3.1 5.4-3.4V18H2z" fill="#6FA88F"/><path d="M2 14.2c2.5 .6 5 .6 7.5-.6" fill="none" stroke="#fff" stroke-width=".9"/></svg>
<svg style="left:324.5px;top:144.8px" width="38" height="21" viewBox="0 0 38 21"><rect x="0.40" y="0.3" width="1.00" height="17.6" fill="#666"/><rect x="2.50" y="0.3" width="4.50" height="17.6" fill="#A2A2A2"/><rect x="2.50" y="0.3" width="0.80" height="17.6" fill="#888"/><rect x="7.00" y="0.3" width="1.00" height="17.6" fill="#C0C0C0"/><rect x="8.00" y="0.3" width="1.50" height="17.6" fill="#9A9A9A"/><rect x="9.50" y="0.3" width="1.00" height="17.6" fill="#777"/><rect x="10.50" y="0.3" width="3.00" height="17.6" fill="#929292"/><rect x="13.50" y="0.3" width="1.00" height="17.6" fill="#666"/><rect x="14.50" y="0.3" width="2.50" height="17.6" fill="#A6A6A6"/><rect x="17.00" y="0.3" width="3.00" height="17.6" fill="#E6E6E6"/><rect x="20.40" y="0.3" width="5.00" height="17.6" fill="#A4A4A4"/><rect x="22.00" y="0.3" width="0.80" height="17.6" fill="#8C8C8C"/><rect x="25.40" y="0.3" width="1.50" height="17.6" fill="#1E1E28"/><rect x="28.90" y="0.3" width="1.10" height="17.6" fill="#888"/><rect x="31.30" y="0.3" width="0.80" height="17.6" fill="#777"/><rect x="33.60" y="0.3" width="3.80" height="17.6" fill="#A8A8A8"/><path d="M7 19.2h24" stroke="#555" stroke-width="1.2" stroke-dasharray="1 2.2"/></svg>
<div style="left:381.30px;top:136px;font-size:6px;line-height:6px;color:#8A8A8A;white-space:nowrap;transform:scaleX(0.93);transform-origin:0 0">Ваш <b style="color:#666">текст</b> здесь</div>
<svg style="left:371px;top:145px" width="20" height="20" viewBox="0 0 20 20"><rect x="0.5" y="0.5" width="19" height="19" fill="#fff" stroke="#5E5E5E" stroke-width="1"/><rect x="2" y="2" width="16" height="16" fill="#4A7FC6"/><circle cx="8.3" cy="6.9" r="3.1" fill="#fff"/><path d="M2 11.2c2.2-.9 4.5-.9 6.8.2c2 .9 3.2 1.1 3.8.8c2-1 3.8-3 5.4-3.4V18H2z" fill="#fff"/><path d="M2 12.4c2.2-.8 4.3-.7 6.4.5c2 1 3.2 1 4.2.5c2.1-1.2 3.6-3.1 5.4-3.4V18H2z" fill="#6FA88F"/><path d="M2 14.2c2.5 .6 5 .6 7.5-.6" fill="none" stroke="#fff" stroke-width=".9"/></svg>
<svg style="left:397.5px;top:144.8px" width="38" height="21" viewBox="0 0 38 21"><rect x="0.40" y="0.3" width="1.00" height="17.6" fill="#666"/><rect x="2.50" y="0.3" width="4.50" height="17.6" fill="#A2A2A2"/><rect x="2.50" y="0.3" width="0.80" height="17.6" fill="#888"/><rect x="7.00" y="0.3" width="1.00" height="17.6" fill="#C0C0C0"/><rect x="8.00" y="0.3" width="1.50" height="17.6" fill="#9A9A9A"/><rect x="9.50" y="0.3" width="1.00" height="17.6" fill="#777"/><rect x="10.50" y="0.3" width="3.00" height="17.6" fill="#929292"/><rect x="13.50" y="0.3" width="1.00" height="17.6" fill="#666"/><rect x="14.50" y="0.3" width="2.50" height="17.6" fill="#A6A6A6"/><rect x="17.00" y="0.3" width="3.00" height="17.6" fill="#E6E6E6"/><rect x="20.40" y="0.3" width="5.00" height="17.6" fill="#A4A4A4"/><rect x="22.00" y="0.3" width="0.80" height="17.6" fill="#8C8C8C"/><rect x="25.40" y="0.3" width="1.50" height="17.6" fill="#1E1E28"/><rect x="28.90" y="0.3" width="1.10" height="17.6" fill="#888"/><rect x="31.30" y="0.3" width="0.80" height="17.6" fill="#777"/><rect x="33.60" y="0.3" width="3.80" height="17.6" fill="#A8A8A8"/><path d="M7 19.2h24" stroke="#555" stroke-width="1.2" stroke-dasharray="1 2.2"/></svg>
<div style="left:0px;top:472px;width:640px;height:13px;background:#F47300;"></div>
<div style="left:11.00px;top:474.00px;font-size:8.5px;line-height:8.5px;color:#ffffff;font-weight:400;transform:scaleX(0.8212);transform-origin:0 0;white-space:nowrap;-webkit-text-stroke:0.1px currentColor;">Страница 1/1</div>
<div style="left:76.00px;top:474.00px;font-size:8.5px;line-height:8.5px;color:#ffffff;font-weight:400;transform:scaleX(0.8179);transform-origin:0 0;white-space:nowrap;-webkit-text-stroke:0.1px currentColor;">Этикетки 1-3 из3</div>
<div style="left:151.80px;top:474.00px;font-size:8.5px;line-height:8.5px;color:#ffffff;font-weight:400;transform:scaleX(0.7319);transform-origin:0 0;white-space:nowrap;-webkit-text-stroke:0.1px currentColor;">GROUP 1</div>
<div style="left:201.00px;top:474.00px;font-size:8.5px;line-height:8.5px;color:#ffffff;font-weight:400;transform:scaleX(0.7706);transform-origin:0 0;white-space:nowrap;-webkit-text-stroke:0.1px currentColor;">21,00 X 29,70</div>
<div style="left:264.00px;top:474.00px;font-size:8.5px;line-height:8.5px;color:#ffffff;font-weight:400;transform:scaleX(0.7314);transform-origin:0 0;white-space:nowrap;-webkit-text-stroke:0.1px currentColor;">6,35 X 3,38</div>
<svg style="left:317px;top:474.5px" width="12" height="8" viewBox="0 0 12 8"><g fill="#fff"><rect x="0.5" y="0.5" width="5.2" height="3.3"/><rect x="6.4" y="0.5" width="5" height="3.3"/><rect x="0.5" y="4.4" width="5.2" height="3.3"/><rect x="6.4" y="4.4" width="5" height="3.3"/></g></svg>
<div style="left:329.50px;top:474.00px;font-size:8.5px;line-height:8.5px;color:#ffffff;font-weight:400;transform:scaleX(0.7489);transform-origin:0 0;white-space:nowrap;-webkit-text-stroke:0.1px currentColor;">AVERY - J8159</div>
<div style="left:448.60px;top:474.00px;font-size:8.5px;line-height:8.5px;color:#ffffff;font-weight:400;transform:scaleX(0.8329);transform-origin:0 0;white-space:nowrap;-webkit-text-stroke:0.1px currentColor;">Масштаб</div>
<svg style="left:482px;top:473px" width="10" height="11" viewBox="0 0 10 11"><path d="M1.5 1.5H5.8L8.5 4.2V9.5H1.5Z" fill="none" stroke="#fff" stroke-width="1"/></svg>
<svg style="left:494px;top:473px" width="10" height="11" viewBox="0 0 10 11"><path d="M1.5 1.5H5.8L8.5 4.2V9.5H1.5Z" fill="none" stroke="#fff" stroke-width="1"/><path d="M2 5.5h2M6 5.5h2" stroke="#fff" stroke-width="1"/><path d="M4.6 5.5l-1.2-1.2v2.4z M5.4 5.5l1.2-1.2v2.4z" fill="#fff"/></svg>
<svg style="left:507px;top:473px" width="10" height="11" viewBox="0 0 10 11"><path d="M1.5 1.5H5.8L8.5 4.2V9.5H1.5Z" fill="none" stroke="#fff" stroke-width="1"/><path d="M1.5 3.5h6M1.5 7.5h7" stroke="#fff" stroke-width="1"/></svg>
<div style="left:522.80px;top:474.00px;font-size:8.5px;line-height:8.5px;color:#ffffff;font-weight:400;transform:scaleX(0.7562);transform-origin:0 0;white-space:nowrap;-webkit-text-stroke:0.1px currentColor;">49%</div>
<div style="left:541px;top:478px;width:3.5px;height:1.2px;background:#fff;"></div>
<div style="left:548px;top:478px;width:69.5px;height:1px;background:#fff;"></div>
<div style="left:571px;top:475px;width:1.6px;height:6.5px;background:#fff;"></div>
<div style="left:620px;top:478px;width:5.5px;height:1.2px;background:#fff;"></div>
<div style="left:622.1px;top:475.9px;width:1.2px;height:5.5px;background:#fff;"></div>
<div style="left:223.27px;top:95px;font-size:6.5px;line-height:6.5px;color:#6E6E6E;white-space:nowrap">1</div><div style="left:234.34px;top:95px;font-size:6.5px;line-height:6.5px;color:#6E6E6E;white-space:nowrap">2</div><div style="left:245.41px;top:95px;font-size:6.5px;line-height:6.5px;color:#6E6E6E;white-space:nowrap">3</div><div style="left:256.48px;top:95px;font-size:6.5px;line-height:6.5px;color:#6E6E6E;white-space:nowrap">4</div><div style="left:267.55px;top:95px;font-size:6.5px;line-height:6.5px;color:#6E6E6E;white-space:nowrap">5</div><div style="left:278.62px;top:95px;font-size:6.5px;line-height:6.5px;color:#6E6E6E;white-space:nowrap">6</div><div style="left:289.69px;top:95px;font-size:6.5px;line-height:6.5px;color:#6E6E6E;white-space:nowrap">7</div><div style="left:300.76px;top:95px;font-size:6.5px;line-height:6.5px;color:#6E6E6E;white-space:nowrap">8</div><div style="left:311.83px;top:95px;font-size:6.5px;line-height:6.5px;color:#6E6E6E;white-space:nowrap">9</div><div style="left:321.09px;top:95px;font-size:6.5px;line-height:6.5px;color:#6E6E6E;white-space:nowrap">10</div><div style="left:332.40px;top:95px;font-size:6.5px;line-height:6.5px;color:#6E6E6E;white-space:nowrap">11</div><div style="left:343.23px;top:95px;font-size:6.5px;line-height:6.5px;color:#6E6E6E;white-space:nowrap">12</div><div style="left:354.30px;top:95px;font-size:6.5px;line-height:6.5px;color:#6E6E6E;white-space:nowrap">13</div><div style="left:365.37px;top:95px;font-size:6.5px;line-height:6.5px;color:#6E6E6E;white-space:nowrap">14</div><div style="left:376.44px;top:95px;font-size:6.5px;line-height:6.5px;color:#6E6E6E;white-space:nowrap">15</div><div style="left:387.51px;top:95px;font-size:6.5px;line-height:6.5px;color:#6E6E6E;white-space:nowrap">16</div><div style="left:398.58px;top:95px;font-size:6.5px;line-height:6.5px;color:#6E6E6E;white-space:nowrap">17</div><div style="left:409.65px;top:95px;font-size:6.5px;line-height:6.5px;color:#6E6E6E;white-space:nowrap">18</div><div style="left:420.72px;top:95px;font-size:6.5px;line-height:6.5px;color:#6E6E6E;white-space:nowrap">19</div><div style="left:431.79px;top:95px;font-size:6.5px;line-height:6.5px;color:#6E6E6E;white-space:nowrap">20</div>
<div style="left:29.90px;top:126px;font-size:6.5px;line-height:6.5px;color:#7A7A7A;white-space:nowrap;transform:scaleX(.85);transform-origin:0 0">1</div><div style="left:29.90px;top:138px;font-size:6.5px;line-height:6.5px;color:#7A7A7A;white-space:nowrap;transform:scaleX(.85);transform-origin:0 0">2</div><div style="left:29.90px;top:149px;font-size:6.5px;line-height:6.5px;color:#7A7A7A;white-space:nowrap;transform:scaleX(.85);transform-origin:0 0">3</div><div style="left:29.90px;top:160px;font-size:6.5px;line-height:6.5px;color:#7A7A7A;white-space:nowrap;transform:scaleX(.85);transform-origin:0 0">4</div><div style="left:29.90px;top:171px;font-size:6.5px;line-height:6.5px;color:#7A7A7A;white-space:nowrap;transform:scaleX(.85);transform-origin:0 0">5</div><div style="left:29.90px;top:182px;font-size:6.5px;line-height:6.5px;color:#7A7A7A;white-space:nowrap;transform:scaleX(.85);transform-origin:0 0">6</div><div style="left:29.90px;top:193px;font-size:6.5px;line-height:6.5px;color:#7A7A7A;white-space:nowrap;transform:scaleX(.85);transform-origin:0 0">7</div><div style="left:29.90px;top:204px;font-size:6.5px;line-height:6.5px;color:#7A7A7A;white-space:nowrap;transform:scaleX(.85);transform-origin:0 0">8</div><div style="left:29.90px;top:215px;font-size:6.5px;line-height:6.5px;color:#7A7A7A;white-space:nowrap;transform:scaleX(.85);transform-origin:0 0">9</div><div style="left:26.83px;top:226px;font-size:6.5px;line-height:6.5px;color:#7A7A7A;white-space:nowrap;transform:scaleX(.85);transform-origin:0 0">10</div><div style="left:27.24px;top:237px;font-size:6.5px;line-height:6.5px;color:#7A7A7A;white-space:nowrap;transform:scaleX(.85);transform-origin:0 0">11</div><div style="left:26.83px;top:248px;font-size:6.5px;line-height:6.5px;color:#7A7A7A;white-space:nowrap;transform:scaleX(.85);transform-origin:0 0">12</div><div style="left:26.83px;top:259px;font-size:6.5px;line-height:6.5px;color:#7A7A7A;white-space:nowrap;transform:scaleX(.85);transform-origin:0 0">13</div><div style="left:26.83px;top:270px;font-size:6.5px;line-height:6.5px;color:#7A7A7A;white-space:nowrap;transform:scaleX(.85);transform-origin:0 0">14</div><div style="left:26.83px;top:281px;font-size:6.5px;line-height:6.5px;color:#7A7A7A;white-space:nowrap;transform:scaleX(.85);transform-origin:0 0">15</div><div style="left:26.83px;top:293px;font-size:6.5px;line-height:6.5px;color:#7A7A7A;white-space:nowrap;transform:scaleX(.85);transform-origin:0 0">16</div><div style="left:26.83px;top:304px;font-size:6.5px;line-height:6.5px;color:#7A7A7A;white-space:nowrap;transform:scaleX(.85);transform-origin:0 0">17</div><div style="left:26.83px;top:315px;font-size:6.5px;line-height:6.5px;color:#7A7A7A;white-space:nowrap;transform:scaleX(.85);transform-origin:0 0">18</div><div style="left:26.83px;top:326px;font-size:6.5px;line-height:6.5px;color:#7A7A7A;white-space:nowrap;transform:scaleX(.85);transform-origin:0 0">19</div><div style="left:26.83px;top:337px;font-size:6.5px;line-height:6.5px;color:#7A7A7A;white-space:nowrap;transform:scaleX(.85);transform-origin:0 0">20</div><div style="left:26.83px;top:348px;font-size:6.5px;line-height:6.5px;color:#7A7A7A;white-space:nowrap;transform:scaleX(.85);transform-origin:0 0">21</div><div style="left:26.83px;top:359px;font-size:6.5px;line-height:6.5px;color:#7A7A7A;white-space:nowrap;transform:scaleX(.85);transform-origin:0 0">22</div><div style="left:26.83px;top:370px;font-size:6.5px;line-height:6.5px;color:#7A7A7A;white-space:nowrap;transform:scaleX(.85);transform-origin:0 0">23</div><div style="left:26.83px;top:381px;font-size:6.5px;line-height:6.5px;color:#7A7A7A;white-space:nowrap;transform:scaleX(.85);transform-origin:0 0">24</div><div style="left:26.83px;top:392px;font-size:6.5px;line-height:6.5px;color:#7A7A7A;white-space:nowrap;transform:scaleX(.85);transform-origin:0 0">25</div><div style="left:26.83px;top:403px;font-size:6.5px;line-height:6.5px;color:#7A7A7A;white-space:nowrap;transform:scaleX(.85);transform-origin:0 0">26</div><div style="left:26.83px;top:414px;font-size:6.5px;line-height:6.5px;color:#7A7A7A;white-space:nowrap;transform:scaleX(.85);transform-origin:0 0">27</div><div style="left:26.83px;top:425px;font-size:6.5px;line-height:6.5px;color:#7A7A7A;white-space:nowrap;transform:scaleX(.85);transform-origin:0 0">28</div><div style="left:26.83px;top:436px;font-size:6.5px;line-height:6.5px;color:#7A7A7A;white-space:nowrap;transform:scaleX(.85);transform-origin:0 0">29</div>
</body></html>
